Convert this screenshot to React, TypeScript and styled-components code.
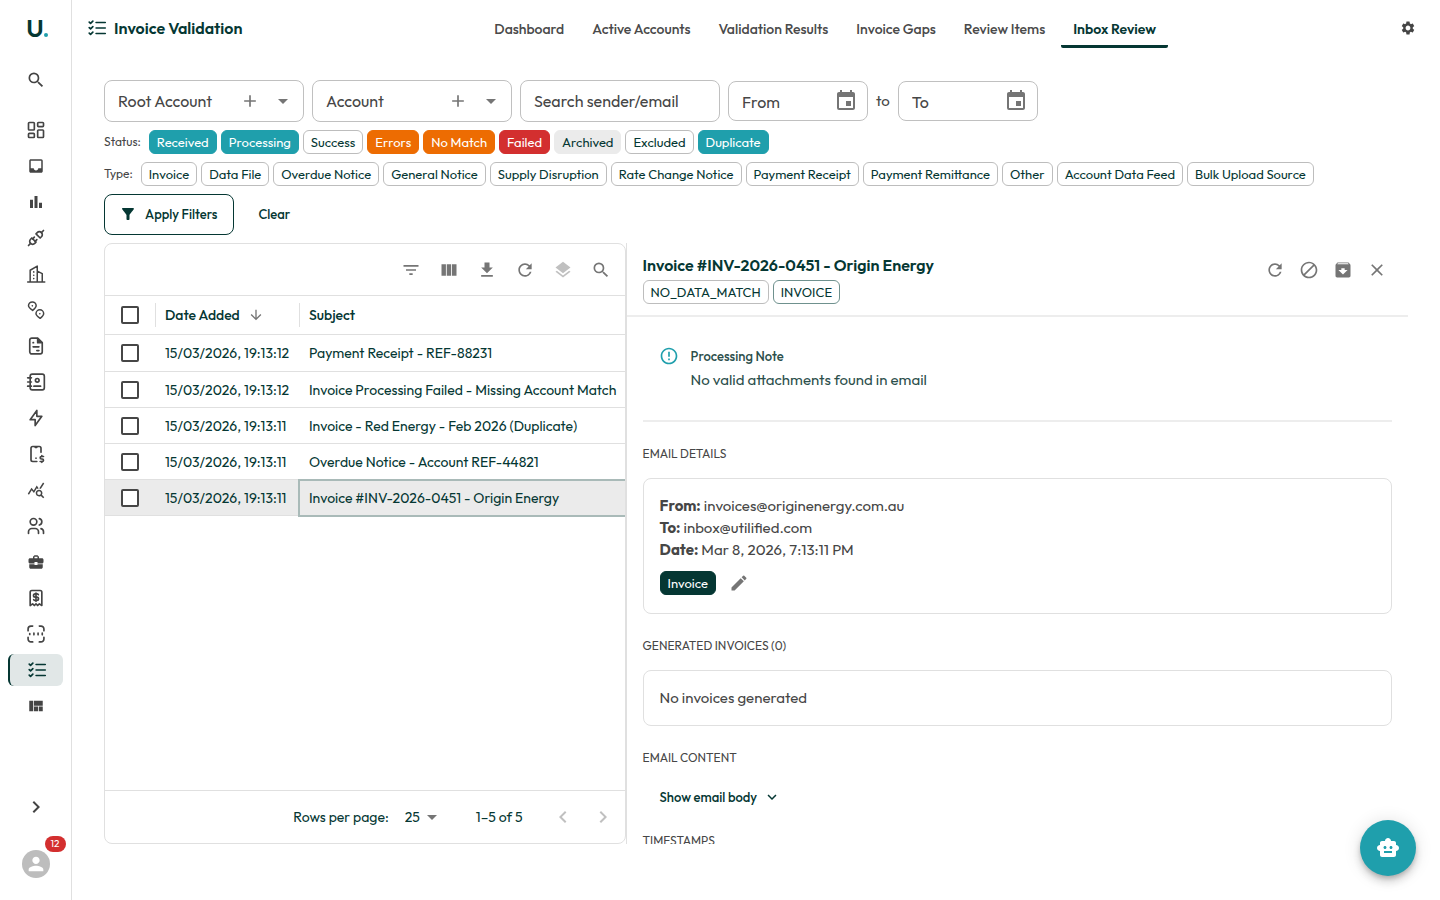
import React from 'react';
import styled, { createGlobalStyle, css } from 'styled-components';
import {
  TbBolt,
  TbDeviceMobileDollar,
  TbListCheck,
  TbPlugConnected,
  TbReceiptDollar,
  TbUsers,
} from 'react-icons/tb';
import {
  MdAdd,
  MdArchive,
  MdArrowDownward,
  MdArrowDropDown,
  MdBarChart,
  MdBlock,
  MdBusinessCenter,
  MdChevronLeft,
  MdChevronRight,
  MdClose,
  MdEdit,
  MdErrorOutline,
  MdEvent,
  MdExpandMore,
  MdFileDownload,
  MdFilterAlt,
  MdFilterList,
  MdInbox,
  MdLayers,
  MdPerson,
  MdQueryStats,
  MdRefresh,
  MdSearch,
  MdSettings,
  MdSmartToy,
  MdViewQuilt,
} from 'react-icons/md';
import { LuLayoutDashboard } from 'react-icons/lu';

const color = {
  ink: '#053733',
  text: '#464646',
  icon: '#757575',
  teal: '#1f9fac',
  orange: '#ed6c02',
  red: '#d32f2f',
  line: '#e0e0e0',
  field: '#c0c0c0',
};

const GlobalStyle = createGlobalStyle`
  *, *::before, *::after { box-sizing: border-box; }
  body {
    margin: 0;
    background: #fff;
    color: ${color.text};
    font: 400 14px/20px Outfit, Lato, sans-serif;
  }
  button, input, select { font: inherit; color: inherit; }
  h1, h2, h3, p { margin: 0; font-weight: 400; }
  svg { display: block; flex: none; }
`;

/* ---------- shell ---------- */

const Shell = styled.div`
  display: flex;
  min-height: 100vh;
`;

const Sidebar = styled.aside`
  flex: none;
  display: flex;
  flex-direction: column;
  width: 72px;
  padding: 16px 8px;
  border-right: 1px solid ${color.line};
  color: #444;
`;

const Logo = styled.a`
  align-self: center;
  display: flex;
  align-items: baseline;
  padding-left: 3px;
  color: ${color.ink};
  font-size: 25px;
  font-weight: 600;
  line-height: 24px;
  text-decoration: none;
`;

const LogoDot = styled.span`
  width: 4px;
  height: 4px;
  border-radius: 50%;
  background: ${color.teal};
`;

const SideButton = styled.button`
  display: flex;
  align-items: center;
  justify-content: center;
  height: 32px;
  padding: 0;
  border: 0;
  background: none;
  cursor: pointer;
`;

const SearchButton = styled(SideButton)`
  margin: 24px 0 18px;
`;

const SideNav = styled.nav`
  flex: 1;
  display: flex;
  flex-direction: column;
  gap: 4px;
`;

const SideLink = styled.a<{ $active?: boolean }>`
  display: flex;
  align-items: center;
  justify-content: center;
  height: 32px;
  padding-left: 1px;
  border-radius: 6px;
  color: inherit;
  ${(p) =>
    p.$active &&
    css`
      padding-left: 0;
      border-left: 2px solid ${color.ink};
      background: #e1e7e7;
      color: ${color.ink};
    `}
`;

const Avatar = styled.button`
  position: relative;
  align-self: center;
  display: flex;
  align-items: center;
  justify-content: center;
  width: 28px;
  height: 28px;
  margin: 27px 0 6px;
  padding: 0;
  border: 0;
  border-radius: 50%;
  background: #bdbdbd;

  && { color: #fff; }
`;

const Badge = styled.span`
  position: absolute;
  top: -14px;
  right: -16px;
  min-width: 20px;
  height: 16px;
  padding: 0 6px;
  border-radius: 8px;
  background: ${color.red};
  font-size: 10px;
  line-height: 16px;
`;

const Content = styled.div`
  flex: 1;
  min-width: 0;
  display: flex;
  flex-direction: column;
  height: 100vh;
`;

/* ---------- header ---------- */

const Header = styled.header`
  display: flex;
  align-items: center;
  justify-content: space-between;
  height: 56px;
  padding: 0 20px 0 14px;
`;

const Title = styled.h1`
  display: flex;
  align-items: center;
  gap: 6px;
  color: ${color.ink};
  font-size: 16px;
  font-weight: 600;
`;

const Tabs = styled.nav`
  display: flex;
  gap: 4px;
  margin-left: 12px;
`;

const Tab = styled.a<{ $active?: boolean }>`
  padding: 11px 12px 6px;
  border-bottom: 3px solid ${(p) => (p.$active ? color.ink : 'transparent')};
  border-radius: 2px;
  color: ${(p) => (p.$active ? color.ink : '#4a4a4a')};
  font-weight: ${(p) => (p.$active ? 600 : 500)};
  text-decoration: none;
`;

const IconButton = styled.button<{ $faded?: boolean }>`
  display: flex;
  align-items: center;
  justify-content: center;
  width: 24px;
  height: 24px;
  padding: 0;
  border: 0;
  background: none;
  opacity: ${(p) => (p.$faded ? 0.45 : 1)};

  && { color: ${color.icon}; }
`;

const DarkIconButton = styled(IconButton)`
  && { color: #444; }
`;

/* ---------- filters ---------- */

const Main = styled.main`
  flex: 1;
  min-height: 0;
  display: flex;
  flex-direction: column;
  gap: 8px;
  padding: 24px 32px 56px;
`;

const FilterRow = styled.div`
  display: flex;
  align-items: center;
  gap: 8px;
  font-size: 15px;
`;

const Field = styled.label<{ $short?: boolean }>`
  display: flex;
  align-items: center;
  width: ${(p) => (p.$short ? 140 : 200)}px;
  height: ${(p) => (p.$short ? 40 : 42)}px;
  padding: 0 ${(p) => (p.$short ? 9 : 8)}px 0 13px;
  border: 1px solid ${color.field};
  border-radius: 8px;
  color: ${color.icon};
  font-size: 16px;

  input {
    flex: 1;
    min-width: 0;
    width: 0;
    padding: ${(p) => (p.$short ? '2px 0 0' : 0)};
    border: 0;
    outline: 0;
    background: none;
    color: ${color.text};
  }
  input::placeholder { color: ${color.text}; opacity: 1; }
`;

const FieldIcons = styled.span`
  display: flex;
  align-items: center;
  gap: 11px;
`;

const ChipRow = styled.div`
  display: flex;
  align-items: center;
  gap: 4px;
`;

const ChipLabel = styled.span`
  margin-right: 4px;
  font-size: 12px;
`;

type Tone = 'teal' | 'orange' | 'red' | 'grey' | 'dark' | 'plain' | 'outline';

const tones: Record<Tone, [string, string, string]> = {
  teal: [color.teal, color.teal, '#fff'],
  orange: [color.orange, color.orange, '#fff'],
  red: [color.red, color.red, '#fff'],
  grey: ['#ebebeb', '#ebebeb', color.ink],
  dark: [color.ink, color.ink, '#fff'],
  plain: ['#fff', '#bdbdbd', color.ink],
  outline: ['#fff', '#6f918e', color.ink],
};

const chipStyle = css<{ $tone: Tone }>`
  height: 24px;
  padding: 0 7px;
  border: 1px solid ${(p) => tones[p.$tone][1]};
  border-radius: 6px;
  background: ${(p) => tones[p.$tone][0]};
  white-space: nowrap;

  && {
    color: ${(p) => tones[p.$tone][2]};
    font-size: 13px;
    line-height: 22px;
  }
`;

const ChipButton = styled.button<{ $tone: Tone }>`
  ${chipStyle}
`;

const Tag = styled.span<{ $tone: Tone }>`
  ${chipStyle}
`;

const ActionRow = styled.div`
  display: flex;
  gap: 7px;
`;

const ActionButton = styled.button<{ $outlined?: boolean }>`
  display: flex;
  align-items: center;
  gap: 8px;
  height: 41px;
  padding: 0 16px 1px;
  border: 1px solid ${(p) => (p.$outlined ? color.ink : 'transparent')};
  border-radius: 8px;
  background: none;

  && {
    color: ${color.ink};
    font-size: 13px;
    font-weight: 500;
  }
  svg:first-child { margin-left: -2px; }
`;

/* ---------- inbox grid ---------- */

const Split = styled.div`
  flex: 1;
  min-height: 0;
  display: flex;
`;

const GridPanel = styled.section`
  flex: 0 0 40%;
  display: flex;
  flex-direction: column;
  overflow: hidden;
  border: 1px solid ${color.line};
  border-radius: 8px;
  color: ${color.ink};
`;

const GridToolbar = styled.div`
  display: flex;
  align-items: center;
  justify-content: flex-end;
  gap: 14px;
  height: 52px;
  padding: 0 12px;
  border-bottom: 1px solid ${color.line};
`;

const TableArea = styled.div`
  flex: 1;
  overflow: hidden;
`;

const Table = styled.table`
  width: calc(100% + 60px);
  border-collapse: separate;
  border-spacing: 0;
  table-layout: fixed;
  text-align: left;
`;

const HeadCell = styled.th<{ $width?: number }>`
  width: ${(p) => (p.$width ? `${p.$width}px` : 'auto')};
  height: 39px;
  padding: 0;
  border-bottom: 1px solid ${color.line};
  font-weight: 500;
`;

const HeadInner = styled.div<{ $check?: boolean; $ruled?: boolean }>`
  display: flex;
  align-items: center;
  gap: 8px;
  height: 24px;
  padding-left: ${(p) => (p.$check ? 16 : p.$ruled ? 9 : 10)}px;
  border-left: ${(p) => (p.$ruled ? '1px solid #e0e0e0' : '0')};

  svg { color: ${color.icon}; }
`;

const Cell = styled.td<{ $focused?: boolean }>`
  height: 36px;
  padding: 0 10px;
  border-bottom: 1px solid ${color.line};
  white-space: nowrap;
  ${(p) =>
    p.$focused &&
    css`
      outline: 2px solid #a9bab8;
      outline-offset: -1px;
    `}
`;

const CheckCell = styled(Cell)`
  padding: 0 16px;
`;

const Row = styled.tr<{ $selected?: boolean }>`
  background: ${(p) => (p.$selected ? '#ebebeb' : 'transparent')};

  &:first-child td { height: 37px; }
`;

const Check = styled.input`
  display: block;
  appearance: none;
  width: 18px;
  height: 18px;
  margin: 0;
  border: 2px solid #464646;
  border-radius: 2px;
  background: #fff;
`;

const GridFooter = styled.footer`
  display: flex;
  align-items: center;
  justify-content: flex-end;
  height: 53px;
  padding-right: 10px;
  border-top: 1px solid ${color.line};
`;

const PageSize = styled.label`
  display: flex;
  align-items: center;
  gap: 16px;
`;

const SelectBox = styled.span`
  display: flex;
  align-items: center;

  select {
    width: 15px;
    padding: 0;
    border: 0;
    outline: 0;
    background: none;
    appearance: none;
    overflow: visible;
  }
  svg { color: ${color.icon}; }
`;

const PageCount = styled.span`
  margin: 0 28px 0 32px;
`;

const Pager = styled.span`
  display: flex;
  gap: 16px;
`;

/* ---------- details ---------- */

const Splitter = styled.div`
  flex: none;
  width: 1px;
  background: ${color.line};
`;

const Details = styled.section`
  flex: 1;
  min-width: 0;
  display: flex;
  flex-direction: column;
`;

const DetailsHeader = styled.header`
  flex: none;
  display: flex;
  align-items: center;
  justify-content: space-between;
  height: 74px;
  padding: 0 19px 2px 16px;
  border-bottom: 2px solid #ededed;
`;

const DetailsTitle = styled.h2`
  margin-bottom: 3px;
  color: ${color.ink};
  font-size: 16px;
  font-weight: 600;
  line-height: 24px;
`;

const Tags = styled.div`
  display: flex;
  gap: 4px;
`;

const DetailsActions = styled.div`
  display: flex;
  gap: 10px;
  padding-bottom: 16px;
`;

const DetailsBody = styled.div`
  flex: 1;
  min-height: 0;
  overflow: hidden;
  padding: 16px;
`;

const Note = styled.div`
  display: flex;
  gap: 12px;
  height: 87px;
  padding: 13px 16px;
  color: #2c4f4c;

  > svg { color: ${color.teal}; }
`;

const NoteText = styled.div`
  font-size: 15px;
  line-height: 24px;

  h3 {
    margin-bottom: 2px;
    font-size: 13px;
    font-weight: 500;
    line-height: 20px;
  }
`;

const Section = styled.section`
  padding-top: 24px;
`;

const RuledSection = styled(Section)`
  border-top: 2px solid #ededed;
`;

const SectionTitle = styled.h3`
  margin-bottom: 16px;
  font-size: 12px;
  line-height: 16px;
  text-transform: uppercase;
`;

const Card = styled.div`
  padding: 16px;
  border: 1px solid ${color.line};
  border-radius: 8px;
  font-size: 15px;
  line-height: 22px;

  strong { font-weight: 700; }
`;

const TagLine = styled.div`
  display: flex;
  align-items: center;
  gap: 11px;
  margin: 10px 0 2px;
`;

const TextButton = styled(ActionButton)`
  height: 24px;
  margin-top: 19px;
  padding-bottom: 0;
`;

const ChatButton = styled.button`
  position: fixed;
  right: 24px;
  bottom: 24px;
  display: flex;
  align-items: center;
  justify-content: center;
  width: 56px;
  height: 56px;
  border: 0;
  border-radius: 50%;
  background: ${color.teal};
  box-shadow: 0 3px 5px -1px rgba(0, 0, 0, 0.2), 0 6px 10px rgba(0, 0, 0, 0.14),
    0 1px 18px rgba(0, 0, 0, 0.12);

  && { color: #fff; }
`;

/* ---------- custom icons ---------- */

type IconProps = { size?: number };

const Stroke = ({ size = 20, children }: IconProps & { children: React.ReactNode }) => (
  <svg
    width={size}
    height={size}
    viewBox="0 0 24 24"
    fill="none"
    stroke="currentColor"
    strokeWidth="2"
    strokeLinecap="round"
    strokeLinejoin="round"
  >
    {children}
  </svg>
);

const BuildingsIcon = () => (
  <Stroke>
    <path
      d="M2 21.500h20.500M5 21V7.500L13.500 2.500V21M13.500 8.500l6 3V21"
      strokeWidth="1.800"
    />
    <path d="M9.300 9.500v.01M9.300 13.500v.01M9.300 17.500v.01" />
  </Stroke>
);

const PinsIcon = () => (
  <Stroke>
    <path d="M8 12.500C5 10.300 3 8.800 3 6.900a4.600 4.600 0 0 1 9.200 0c0 2-1.700 3.500-4.200 5.600z" strokeWidth="1.800" />
    <path d="M17 22c-3-2.200-5-3.700-5-5.600a4.600 4.600 0 0 1 9.200 0c0 2-1.700 3.500-4.200 5.600z" strokeWidth="1.800" />
    <path d="M7.600 7v.01M16.600 16.500v.01" />
  </Stroke>
);

const DocumentIcon = () => (
  <Stroke>
    <path d="M14 2.500H7a2.500 2.500 0 0 0-2.500 2.500v14A2.500 2.500 0 0 0 7 21.500h10a2.500 2.500 0 0 0 2.500-2.500V8z" />
    <path d="M14 3v5h5" fill="currentColor" />
    <path d="M8.500 8h.5M8.500 13h7M13 17.500h2.500" />
  </Stroke>
);

const ContactBookIcon = () => (
  <Stroke>
    <rect x="5" y="2.500" width="17" height="19" rx="2.500" />
    <circle cx="13.500" cy="10" r="2.200" />
    <path d="M9.500 17h8M2 7h4.500M2 12h4.500M2 17h4.500" />
  </Stroke>
);

const ScanIcon = () => (
  <Stroke>
    <path d="M2.500 8V6a3.500 3.500 0 0 1 3.500-3.500h2M16 2.500h2A3.500 3.500 0 0 1 21.500 6v2M21.500 16v2a3.500 3.500 0 0 1-3.500 3.500h-2M8 21.500H6A3.500 3.500 0 0 1 2.500 18v-2" />
    <path d="M4.500 11.500v1M9.500 11v2M14.500 11v2M19.500 11v2" />
  </Stroke>
);

const ChecklistIcon = () => (
  <Stroke size={22}>
    <g strokeWidth="1.800">
      <path d="M3.500 5.500L5 7l2.500-2.500M3.500 11.500L5 13l2.500-2.500M3.500 17.500L5 19l2.500-2.500" />
      <path d="M11 6h10M11 12h10M11 18h10" />
    </g>
  </Stroke>
);

const ColumnsIcon = ({ size = 20 }: IconProps) => (
  <svg width={size} height={size} viewBox="0 0 24 24" fill="currentColor">
    <path d="M3 5h5.300v14H3zM9.300 5h5.300v14H9.300zM15.600 5H21v14h-5.400z" />
  </svg>
);

/* ---------- data ---------- */

const sideLinks: { label: string; icon: React.ReactNode; active?: boolean }[] = [
  { label: 'Dashboard', icon: <LuLayoutDashboard size={20} /> },
  { label: 'Inbox', icon: <MdInbox size={18} /> },
  { label: 'Reports', icon: <MdBarChart size={18} /> },
  { label: 'Connections', icon: <TbPlugConnected size={20} /> },
  { label: 'Sites', icon: <BuildingsIcon /> },
  { label: 'Locations', icon: <PinsIcon /> },
  { label: 'Documents', icon: <DocumentIcon /> },
  { label: 'Contacts', icon: <ContactBookIcon /> },
  { label: 'Energy', icon: <TbBolt size={20} /> },
  { label: 'Mobile billing', icon: <TbDeviceMobileDollar size={20} /> },
  { label: 'Analytics', icon: <MdQueryStats size={18} /> },
  { label: 'Users', icon: <TbUsers size={20} /> },
  { label: 'Business', icon: <MdBusinessCenter size={18} /> },
  { label: 'Receipts', icon: <TbReceiptDollar size={20} /> },
  { label: 'Scan', icon: <ScanIcon /> },
  { label: 'Invoice Validation', icon: <ChecklistIcon />, active: true },
  { label: 'Layouts', icon: <MdViewQuilt size={18} /> },
];

const tabs = [
  'Dashboard',
  'Active Accounts',
  'Validation Results',
  'Invoice Gaps',
  'Review Items',
  'Inbox Review',
];

const statuses: [string, Tone][] = [
  ['Received', 'teal'],
  ['Processing', 'teal'],
  ['Success', 'plain'],
  ['Errors', 'orange'],
  ['No Match', 'orange'],
  ['Failed', 'red'],
  ['Archived', 'grey'],
  ['Excluded', 'plain'],
  ['Duplicate', 'teal'],
];

const types = [
  'Invoice',
  'Data File',
  'Overdue Notice',
  'General Notice',
  'Supply Disruption',
  'Rate Change Notice',
  'Payment Receipt',
  'Payment Remittance',
  'Other',
  'Account Data Feed',
  'Bulk Upload Source',
];

const rows: [string, string][] = [
  ['15/03/2026, 19:13:12', 'Payment Receipt - REF-88231'],
  ['15/03/2026, 19:13:12', 'Invoice Processing Failed - Missing Account Match'],
  ['15/03/2026, 19:13:11', 'Invoice - Red Energy - Feb 2026 (Duplicate)'],
  ['15/03/2026, 19:13:11', 'Overdue Notice - Account REF-44821'],
  ['15/03/2026, 19:13:11', 'Invoice #INV-2026-0451 - Origin Energy'],
];

/* ---------- page ---------- */

const AccountField = ({ label }: { label: string }) => (
  <Field>
    <input aria-label={label} placeholder={label} />
    <FieldIcons>
      <MdAdd size={20} />
      <MdArrowDropDown size={24} />
    </FieldIcons>
  </Field>
);

const DateField = ({ label }: { label: string }) => (
  <Field $short>
    <input aria-label={label} placeholder={label} />
    <MdEvent size={24} />
  </Field>
);

export default function App() {
  return (
    <>
      <GlobalStyle />
      <Shell>
        <Sidebar>
          <Logo href="#home" aria-label="Home">
            U
            <LogoDot />
          </Logo>
          <SearchButton aria-label="Search">
            <MdSearch size={20} />
          </SearchButton>
          <SideNav>
            {sideLinks.map((l) => (
              <SideLink key={l.label} href="#nav" aria-label={l.label} $active={l.active}>
                {l.icon}
              </SideLink>
            ))}
          </SideNav>
          <SideButton aria-label="Expand menu">
            <MdChevronRight size={24} />
          </SideButton>
          <Avatar aria-label="Account">
            <MdPerson size={22} />
            <Badge>12</Badge>
          </Avatar>
        </Sidebar>

        <Content>
          <Header>
            <Title>
              <ChecklistIcon />
              Invoice Validation
            </Title>
            <Tabs>
              {tabs.map((t) => (
                <Tab key={t} href="#tab" $active={t === 'Inbox Review'}>
                  {t}
                </Tab>
              ))}
            </Tabs>
            <DarkIconButton aria-label="Settings">
              <MdSettings size={16} />
            </DarkIconButton>
          </Header>

          <Main>
            <FilterRow>
              <AccountField label="Root Account" />
              <AccountField label="Account" />
              <Field>
                <input aria-label="Search sender/email" placeholder="Search sender/email" />
              </Field>
              <DateField label="From" />
              <span>to</span>
              <DateField label="To" />
            </FilterRow>

            <ChipRow>
              <ChipLabel>Status:</ChipLabel>
              {statuses.map(([label, tone]) => (
                <ChipButton key={label} $tone={tone}>
                  {label}
                </ChipButton>
              ))}
            </ChipRow>
            <ChipRow>
              <ChipLabel>Type:</ChipLabel>
              {types.map((label) => (
                <ChipButton key={label} $tone="plain">
                  {label}
                </ChipButton>
              ))}
            </ChipRow>

            <ActionRow>
              <ActionButton $outlined>
                <MdFilterAlt size={18} />
                Apply Filters
              </ActionButton>
              <ActionButton>Clear</ActionButton>
            </ActionRow>

            <Split>
              <GridPanel>
                <GridToolbar>
                  <IconButton aria-label="Filters">
                    <MdFilterList size={20} />
                  </IconButton>
                  <IconButton aria-label="Columns">
                    <ColumnsIcon />
                  </IconButton>
                  <IconButton aria-label="Export">
                    <MdFileDownload size={20} />
                  </IconButton>
                  <IconButton aria-label="Refresh">
                    <MdRefresh size={20} />
                  </IconButton>
                  <IconButton aria-label="Bulk actions" $faded>
                    <MdLayers size={20} />
                  </IconButton>
                  <IconButton aria-label="Search rows">
                    <MdSearch size={20} />
                  </IconButton>
                </GridToolbar>

                <TableArea>
                  <Table>
                    <thead>
                      <tr>
                        <HeadCell $width={50}>
                          <HeadInner $check>
                            <Check type="checkbox" aria-label="Select all rows" />
                          </HeadInner>
                        </HeadCell>
                        <HeadCell $width={144}>
                          <HeadInner $ruled>
                            Date Added
                            <MdArrowDownward size={16} />
                          </HeadInner>
                        </HeadCell>
                        <HeadCell>
                          <HeadInner $ruled>Subject</HeadInner>
                        </HeadCell>
                      </tr>
                    </thead>
                    <tbody>
                      {rows.map(([date, subject], i) => (
                        <Row key={subject} $selected={i === 4}>
                          <CheckCell>
                            <Check type="checkbox" aria-label={`Select ${subject}`} />
                          </CheckCell>
                          <Cell>{date}</Cell>
                          <Cell $focused={i === 4}>{subject}</Cell>
                        </Row>
                      ))}
                    </tbody>
                  </Table>
                </TableArea>

                <GridFooter>
                  <PageSize>
                    Rows per page:
                    <SelectBox>
                      <select defaultValue="25">
                        <option>25</option>
                        <option>50</option>
                      </select>
                      <MdArrowDropDown size={24} />
                    </SelectBox>
                  </PageSize>
                  <PageCount>1–5 of 5</PageCount>
                  <Pager>
                    <IconButton aria-label="Previous page" $faded>
                      <MdChevronLeft size={24} />
                    </IconButton>
                    <IconButton aria-label="Next page" $faded>
                      <MdChevronRight size={24} />
                    </IconButton>
                  </Pager>
                </GridFooter>
              </GridPanel>

              <Splitter />

              <Details>
                <DetailsHeader>
                  <div>
                    <DetailsTitle>Invoice #INV-2026-0451 - Origin Energy</DetailsTitle>
                    <Tags>
                      <Tag $tone="plain">NO_DATA_MATCH</Tag>
                      <Tag $tone="outline">INVOICE</Tag>
                    </Tags>
                  </div>
                  <DetailsActions>
                    <IconButton aria-label="Reprocess">
                      <MdRefresh size={20} />
                    </IconButton>
                    <IconButton aria-label="Exclude">
                      <MdBlock size={20} />
                    </IconButton>
                    <IconButton aria-label="Archive">
                      <MdArchive size={20} />
                    </IconButton>
                    <IconButton aria-label="Close">
                      <MdClose size={20} />
                    </IconButton>
                  </DetailsActions>
                </DetailsHeader>

                <DetailsBody>
                  <Note>
                    <MdErrorOutline size={20} />
                    <NoteText>
                      <h3>Processing Note</h3>
                      <p>No valid attachments found in email</p>
                    </NoteText>
                  </Note>

                  <RuledSection>
                    <SectionTitle>Email Details</SectionTitle>
                    <Card>
                      <p>
                        <strong>From:</strong> invoices@originenergy.com.au
                      </p>
                      <p>
                        <strong>To:</strong> inbox@utilified.com
                      </p>
                      <p>
                        <strong>Date:</strong> Mar 8, 2026, 7:13:11 PM
                      </p>
                      <TagLine>
                        <Tag $tone="dark">Invoice</Tag>
                        <IconButton aria-label="Edit type">
                          <MdEdit size={20} />
                        </IconButton>
                      </TagLine>
                    </Card>
                  </RuledSection>

                  <Section>
                    <SectionTitle>Generated Invoices (0)</SectionTitle>
                    <Card>No invoices generated</Card>
                  </Section>

                  <Section>
                    <SectionTitle>Email Content</SectionTitle>
                    <TextButton>
                      Show email body
                      <MdExpandMore size={18} />
                    </TextButton>
                  </Section>

                  <Section>
                    <SectionTitle>Timestamps</SectionTitle>
                  </Section>
                </DetailsBody>
              </Details>
            </Split>
          </Main>
        </Content>
      </Shell>
      <ChatButton aria-label="Open assistant">
        <MdSmartToy size={24} />
      </ChatButton>
    </>
  );
}
